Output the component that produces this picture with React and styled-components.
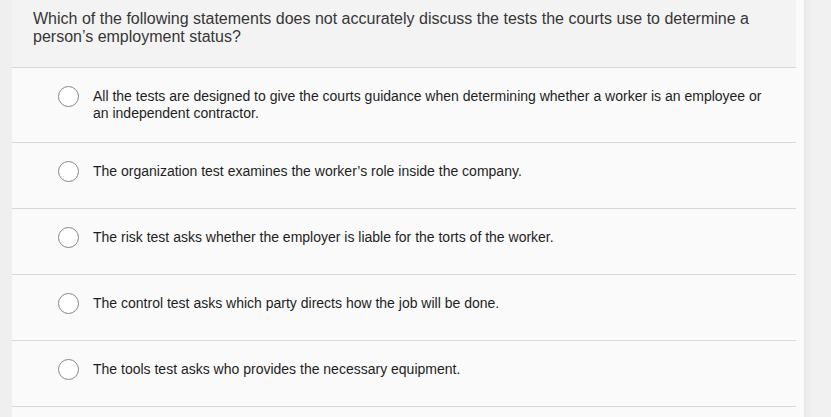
import styled, { createGlobalStyle } from 'styled-components';

const GlobalStyle = createGlobalStyle`
    html, body {
        margin: 0;
        padding: 0;
        background: #efefef;
    }
    body {
        font-family: 'Liberation Sans', Arial, Helvetica, sans-serif;
    }
`;

const options = [
    'All the tests are designed to give the courts guidance when determining whether a worker is an employee or an independent contractor.',
    'The organization test examines the worker’s role inside the company.',
    'The risk test asks whether the employer is liable for the torts of the worker.',
    'The control test asks which party directs how the job will be done.',
    'The tools test asks who provides the necessary equipment.',
];

const App = () => (
    <>
        <GlobalStyle />
        <Page>
            <Panel>
                <Question>
                    Which of the following statements does not accurately
                    discuss the tests the courts use to determine a person’s
                    employment status?
                </Question>
                <OptionList>
                    {options.map((text) => (
                        <Option key={text}>
                            <Radio />
                            <Label>{text}</Label>
                        </Option>
                    ))}
                </OptionList>
            </Panel>
            <Gutter />
        </Page>
    </>
);

const Page = styled.div`
    display: flex;
    min-height: 100vh;
    padding-left: 12px;
`;

const Panel = styled.div`
    width: 784px;
    padding-right: 8px;
    background: #fafafa;
`;

const Gutter = styled.div`
    flex: 1;
    background: linear-gradient(to right, #e9e9e9 0, #f1f1f1 8px);
`;

const Question = styled.div`
    box-sizing: border-box;
    height: 68px;
    padding: 10px 36px 0 21px;
    background: #f3f3f3;
    border-bottom: 1px solid #d8d8d8;
    color: #363636;
    font-size: 16px;
    line-height: 18px;
`;

const OptionList = styled.div`
    display: flex;
    flex-direction: column;
`;

const Option = styled.label`
    box-sizing: border-box;
    display: flex;
    align-items: flex-start;
    gap: 14px;
    min-height: 66px;
    padding: 20px 30px 20px 46px;
    border-bottom: 1px solid #d8d8d8;
    cursor: pointer;
`;

const Radio = styled.span`
    flex: none;
    box-sizing: border-box;
    width: 21px;
    height: 21px;
    margin-top: -2px;
    border: 1px solid #868686;
    border-radius: 50%;
    background: #ffffff;
`;

const Label = styled.span`
    color: #1e1e1e;
    font-size: 14px;
    line-height: 17px;
`;

export default App;
